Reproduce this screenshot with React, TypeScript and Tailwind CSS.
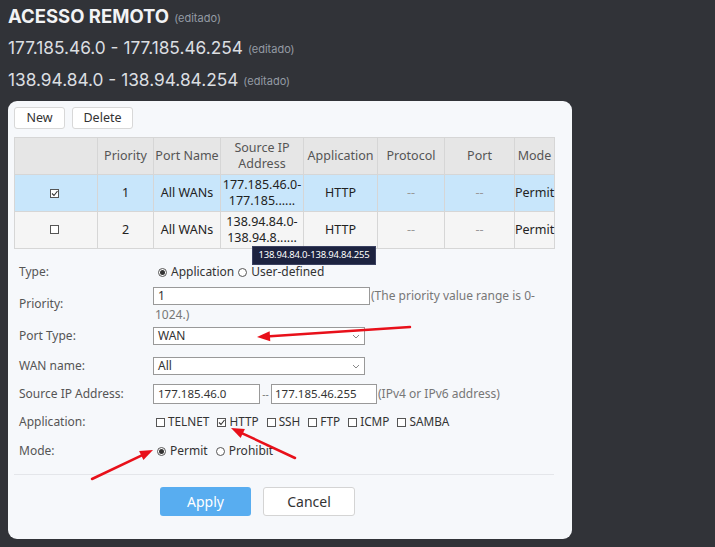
import React from "react";

const ui = { fontFamily: '"Noto Sans", "Open Sans", sans-serif' };
const chat = { fontFamily: 'Inter, "Noto Sans", sans-serif' };

const cols = [83, 56, 67, 83, 74, 67, 70, 40];

const Radio = ({ on }: { on?: boolean }) => (
  <span className="inline-flex w-[9px] h-[9px] rounded-full border border-[#555] items-center justify-center bg-white mr-[4px]">
    {on && <span className="w-[5px] h-[5px] rounded-full bg-[#333]" />}
  </span>
);

const Check = ({ on }: { on?: boolean }) => (
  <span className="inline-flex w-[9px] h-[9px] border border-[#555] bg-white items-center justify-center mr-[3px]">
    {on && (
      <svg width="7" height="7" viewBox="0 0 7 7">
        <path d="M1 3.5 L3 5.5 L6.5 1" stroke="#333" strokeWidth="1.1" fill="none" />
      </svg>
    )}
  </span>
);

const Chevron = () => (
  <svg width="8" height="5" viewBox="0 0 8 5" className="mr-[4px]">
    <path d="M1 1 L4 4 L7 1" stroke="#888" strokeWidth="1" fill="none" />
  </svg>
);

const Label = ({ children, h = "h-[18px]" }: { children: React.ReactNode; h?: string }) => (
  <div className={`w-[134px] shrink-0 flex items-center text-[12px] text-[#555] ${h}`}>{children}</div>
);

const Row = ({ cells, bg }: { cells: React.ReactNode[]; bg: string }) => (
  <tr className={`h-[37px] ${bg}`}>
    {cells.map((c, i) => (
      <td key={i} className="border border-[#d6d6d6] text-center text-[12.5px] text-[#222] leading-[16px] p-0">
        {c}
      </td>
    ))}
  </tr>
);

const Arrow = ({ x1, y1, x2, y2 }: { x1: number; y1: number; x2: number; y2: number }) => {
  const a = Math.atan2(y2 - y1, x2 - x1);
  const L = 13;
  const W = 5;
  const bx = x2 - L * Math.cos(a);
  const by = y2 - L * Math.sin(a);
  const px = -Math.sin(a) * W;
  const py = Math.cos(a) * W;
  return (
    <g>
      <line x1={x1} y1={y1} x2={bx} y2={by} stroke="#e8101a" strokeWidth="2.5" strokeLinecap="round" />
      <polygon points={`${x2},${y2} ${bx + px},${by + py} ${bx - px},${by - py}`} fill="#e8101a" />
    </g>
  );
};

export default function App() {
  return (
    <div className="relative w-[715px] h-[547px] bg-[#313338] overflow-hidden">
      <div className="pl-2 pt-[6px]" style={chat}>
        <div className="h-[22px] flex items-center">
          <span className="text-[18.5px] font-bold text-[#f2f3f5]">ACESSO REMOTO</span>
          <span className="text-[11px] text-[#949ba4] ml-[5px] mt-[3px]">(editado)</span>
        </div>
        <div className="h-[22px] mt-[9px] flex items-center">
          <span className="text-[17.3px] text-[#dbdee1]">177.185.46.0 - 177.185.46.254</span>
          <span className="text-[11px] text-[#949ba4] ml-[5px] mt-[3px]">(editado)</span>
        </div>
        <div className="h-[22px] mt-[10px] flex items-center">
          <span className="text-[17.3px] text-[#dbdee1]">138.94.84.0 - 138.94.84.254</span>
          <span className="text-[11px] text-[#949ba4] ml-[5px] mt-[3px]">(editado)</span>
        </div>
      </div>

      <div className="ml-2 mt-[10px] w-[564px] h-[438px] rounded-[9px] bg-[#f6f8fb] px-[6px] pt-[6px]" style={ui}>
        <div className="flex gap-[7px]">
          <button className="w-[51px] h-[22px] bg-white border border-[#d8d8d8] rounded-[3px] text-[12.5px] text-[#333]">New</button>
          <button className="w-[61px] h-[22px] bg-white border border-[#d8d8d8] rounded-[3px] text-[12.5px] text-[#333]">Delete</button>
        </div>

        <div className="relative mt-[8px] w-[540px]">
          <table className="w-[540px] border-collapse table-fixed">
            <colgroup>
              {cols.map((w, i) => (
                <col key={i} style={{ width: w }} />
              ))}
            </colgroup>
            <thead>
              <tr className="h-[37px] bg-[#e6e6e6]">
                {["", "Priority", "Port Name", "Source IP Address", "Application", "Protocol", "Port", "Mode"].map((h, i) => (
                  <th key={i} className="border border-[#d6d6d6] font-normal text-[12.5px] text-[#555] leading-[16px] p-0">
                    {i === 3 ? (
                      <>
                        Source IP
                        <br />
                        Address
                      </>
                    ) : (
                      h
                    )}
                  </th>
                ))}
              </tr>
            </thead>
            <tbody>
              <Row
                bg="bg-[#c8e6fb]"
                cells={[
                  <span className="inline-flex"><Check on /></span>,
                  "1",
                  "All WANs",
                  <>177.185.46.0-<br />177.185......</>,
                  "HTTP",
                  <span className="text-[#999]">--</span>,
                  <span className="text-[#999]">--</span>,
                  "Permit",
                ]}
              />
              <Row
                bg="bg-[#f5f5f5]"
                cells={[
                  <span className="inline-flex"><Check /></span>,
                  "2",
                  "All WANs",
                  <>138.94.84.0-<br />138.94.8......</>,
                  "HTTP",
                  <span className="text-[#999]">--</span>,
                  <span className="text-[#999]">--</span>,
                  "Permit",
                ]}
              />
            </tbody>
          </table>
          <div className="absolute left-[238px] top-[109px] w-[124px] h-[19px] bg-[#1d2340] border border-[#3a4060] flex items-center justify-center whitespace-nowrap text-[9.5px] tracking-[-0.2px] text-white z-10">
            138.94.84.0-138.94.84.255
          </div>
        </div>

        <div className="pl-[5px] text-[12px] text-[#333]">
          <div className="mt-[14px] flex">
            <Label>Type:</Label>
            <div className="h-[18px] flex items-center ml-[5px]">
              <Radio on />
              <span>Application</span>
              <span className="ml-[4px]" />
              <Radio />
              <span>User-defined</span>
            </div>
          </div>

          <div className="mt-[4px] flex items-start">
            <Label h="h-[38px]">Priority:</Label>
            <div className="flex flex-col">
              <div className="h-[21px] flex items-center">
                <div className="w-[217px] h-[18px] bg-white border border-[#999] flex items-center pl-[4px]">1</div>
                <span className="text-[#777] ml-[1px]">(The priority value range is 0-</span>
              </div>
              <div className="h-[17px] flex items-center pl-[2px] text-[#777]">1024.)</div>
            </div>
          </div>

          <div className="mt-[4px] flex">
            <Label>Port Type:</Label>
            <div className="w-[212px] h-[18px] bg-white border border-[#999] flex items-center justify-between pl-[4px]">
              <span>WAN</span>
              <Chevron />
            </div>
          </div>

          <div className="mt-[12px] flex">
            <Label>WAN name:</Label>
            <div className="w-[212px] h-[18px] bg-white border border-[#999] flex items-center justify-between pl-[4px]">
              <span>All</span>
              <Chevron />
            </div>
          </div>

          <div className="mt-[9px] flex items-center">
            <Label h="h-[20px]">Source IP Address:</Label>
            <div className="w-[107px] h-[20px] bg-white border border-[#999] flex items-center pl-[4px] text-[11.5px]">177.185.46.0</div>
            <span className="w-[11px] text-center text-[#777] text-[10px]">--</span>
            <div className="w-[106px] h-[20px] bg-white border border-[#999] flex items-center pl-[3px] text-[11.5px] whitespace-nowrap">177.185.46.255</div>
            <span className="text-[#777] ml-[1px]">(IPv4 or IPv6 address)</span>
          </div>

          <div className="mt-[9px] flex">
            <Label>Application:</Label>
            <div className="h-[18px] flex items-center ml-[3px] text-[11.8px] gap-[8px]">
              {["TELNET", "HTTP", "SSH", "FTP", "ICMP", "SAMBA"].map((a) => (
                <span key={a} className="inline-flex items-center">
                  <Check on={a === "HTTP"} />
                  {a}
                </span>
              ))}
            </div>
          </div>

          <div className="mt-[11px] flex">
            <Label>Mode:</Label>
            <div className="h-[18px] flex items-center ml-[4px]">
              <Radio on />
              <span>Permit</span>
              <span className="ml-[8px]" />
              <Radio />
              <span>Prohibit</span>
            </div>
          </div>
        </div>

        <div className="mt-[14px] w-[540px] border-t border-[#e4e6ea]" />

        <div className="mt-[12px] flex gap-[12px] pl-[146px]">
          <button className="w-[91px] h-[29px] rounded-[3px] bg-[#58adf0] text-white text-[14px]">Apply</button>
          <button className="w-[92px] h-[29px] rounded-[3px] bg-white border border-[#d4d4d4] text-[#333] text-[14px]">Cancel</button>
        </div>
      </div>

      <svg className="absolute left-0 top-0 pointer-events-none" width="715" height="547">
        <Arrow x1={410} y1={327} x2={257} y2={337} />
        <Arrow x1={295} y1={458} x2={231} y2={428} />
        <Arrow x1={92} y1={479} x2={153} y2={450} />
      </svg>
    </div>
  );
}
